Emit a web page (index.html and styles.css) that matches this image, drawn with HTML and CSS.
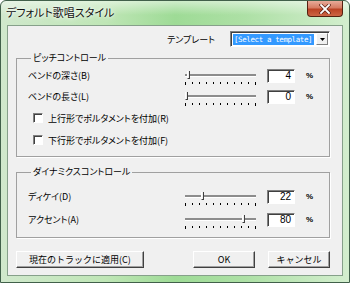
FILE: index.html
```html
<!DOCTYPE html>
<html lang="ja">
<head>
  <meta charset="UTF-8">
  <title>デフォルト歌唱スタイル</title>
  <link rel="stylesheet" href="styles.css">
</head>
<body>
  <div class="window">
    <div class="titlebar">
      <span class="title">デフォルト歌唱スタイル</span>
      <span class="close">
        <svg width="12" height="10" viewBox="0 0 12 10">
          <path d="M2 1 L10 9 M10 1 L2 9" stroke="#5a1f12" stroke-width="3.2" stroke-linecap="square"/>
          <path d="M2 1 L10 9 M10 1 L2 9" stroke="#fff" stroke-width="1.8" stroke-linecap="square"/>
        </svg>
      </span>
    </div>

    <div class="client">
      <div class="template-row">
        <span>テンプレート</span>
        <div class="combo">
          <span class="combo-text">[Select a template]</span>
          <span class="combo-btn">
            <svg width="5" height="3" viewBox="0 0 5 3"><path d="M0 0 H5 L2.5 3 Z" fill="#000"/></svg>
          </span>
        </div>
      </div>

      <fieldset class="group group-pitch">
        <legend>ピッチコントロール</legend>
        <div class="param">
          <span class="param-name">ベンドの深さ(B)</span>
          <div class="slider">
            <div class="track"></div>
            <div class="ticks"><i></i><i></i><i></i><i></i><i></i><i></i><i></i><i></i><i></i><i></i><i></i></div>
            <span class="thumb" style="left: 3px"></span>
          </div>
          <span class="numbox">4</span>
          <span class="unit">%</span>
        </div>
        <div class="param">
          <span class="param-name">ベンドの長さ(L)</span>
          <div class="slider">
            <div class="track"></div>
            <div class="ticks"><i></i><i></i><i></i><i></i><i></i><i></i><i></i><i></i><i></i><i></i><i></i></div>
            <span class="thumb" style="left: 1px"></span>
          </div>
          <span class="numbox">0</span>
          <span class="unit">%</span>
        </div>
        <label class="check check-first"><span class="box"></span>上行形でポルタメントを付加(R)</label>
        <label class="check"><span class="box"></span>下行形でポルタメントを付加(F)</label>
      </fieldset>

      <fieldset class="group group-dyn">
        <legend>ダイナミクスコントロール</legend>
        <div class="param">
          <span class="param-name">ディケイ(D)</span>
          <div class="slider">
            <div class="track"></div>
            <div class="ticks"><i></i><i></i><i></i><i></i><i></i><i></i><i></i><i></i><i></i><i></i><i></i></div>
            <span class="thumb" style="left: 17px"></span>
          </div>
          <span class="numbox">22</span>
          <span class="unit">%</span>
        </div>
        <div class="param">
          <span class="param-name">アクセント(A)</span>
          <div class="slider">
            <div class="track"></div>
            <div class="ticks"><i></i><i></i><i></i><i></i><i></i><i></i><i></i><i></i><i></i><i></i><i></i></div>
            <span class="thumb" style="left: 58px"></span>
          </div>
          <span class="numbox">80</span>
          <span class="unit">%</span>
        </div>
      </fieldset>

      <div class="buttons">
        <button class="btn btn-apply">現在のトラックに適用(C)</button>
        <div class="btn-group">
          <button class="btn">OK</button>
          <button class="btn">キャンセル</button>
        </div>
      </div>
    </div>
  </div>
</body>
</html>
```

FILE: styles.css
```css
* {
  box-sizing: border-box;
}
body {
  margin: 0;
  font-family: "Noto Sans CJK JP", sans-serif;
  font-size: 9px;
  font-feature-settings: "palt";
  color: #000;
  background: #fff;
}
.window {
  width: 350px;
  height: 283px;
  display: flex;
  flex-direction: column;
  border: 1px solid #41604a;
  border-radius: 6px 6px 0 0;
  background:
    linear-gradient(to bottom, rgba(255, 255, 255, 0.5), rgba(255, 255, 255, 0) 14px),
    linear-gradient(to right, #d0e8cc 0%, #bfe6b6 30%, #9edb96 50%, #ade0a5 70%, #d3eece 100%);
}
.titlebar {
  height: 24px;
  display: flex;
  justify-content: space-between;
  align-items: flex-start;
  padding-left: 5px;
}
.title {
  font-size: 11px;
  line-height: 13px;
  margin-top: 5px;
  color: #111;
  text-shadow: 0 0 3px #fff, 0 0 6px #fff;
}
.close {
  width: 36px;
  height: 16px;
  margin-right: 6px;
  display: flex;
  align-items: center;
  justify-content: center;
  border: 1px solid #55200f;
  border-top: none;
  border-radius: 0 0 4px 4px;
  background: linear-gradient(to bottom, #e8ab9a 0%, #d67c63 45%, #bb4325 55%, #cc6544 100%);
}
.client {
  flex: 1;
  margin: 0 6px 6px;
  padding: 5px 12px 0 8px;
  background: #f0f0f0;
  border: 1px solid #86a08a;
}

/* template selector */
.template-row {
  height: 16px;
  display: flex;
  justify-content: flex-end;
  align-items: center;
  gap: 15px;
}
.combo {
  width: 100px;
  height: 16px;
  display: flex;
  align-items: center;
  padding: 0 1px 0 2px;
  background: #fff;
  border: 1px solid;
  border-color: #808080 #fff #fff #808080;
  box-shadow: inset 1px 1px 0 #404040;
}
.combo-text {
  flex-shrink: 0;
  white-space: nowrap;
  width: 81px;
  height: 11px;
  padding: 0 1px;
  background: #3399ff;
  color: #fff;
  font-family: "DejaVu Sans Mono", monospace;
  font-size: 7.5px;
  line-height: 11px;
  letter-spacing: -0.4px;
}
.combo-btn {
  margin-left: auto;
  width: 12px;
  height: 12px;
  display: flex;
  align-items: center;
  justify-content: center;
  background: #f0f0f0;
  border: 1px solid;
  border-color: #fff #808080 #808080 #fff;
}

/* group boxes */
.group {
  margin: 5px 0 0;
  padding: 5px 11px 10px;
  border: 1px solid #a0a0a0;
  box-shadow: 1px 1px 0 #fff;
}
.group legend {
  margin-left: 3px;
  padding: 0 2px;
  line-height: 12px;
}
.group-dyn {
  margin-top: 9px;
  padding-top: 12px;
}
.param {
  display: flex;
  align-items: flex-start;
  height: 14px;
  line-height: 14px;
}
.param + .param {
  margin-top: 7px;
}
.group-dyn .param + .param {
  margin-top: 9px;
}
.param-name {
  width: 156px;
}
.slider {
  position: relative;
  width: 72px;
  height: 16px;
  display: flex;
  flex-direction: column;
}
.track {
  margin: 5px 0 0 1px;
  width: 71px;
  height: 3px;
  background: #8c8c8c;
  border-bottom: 1px solid #fff;
}
.ticks {
  margin: 5px 0 0 1px;
  width: 71px;
  height: 3px;
  display: flex;
  justify-content: space-between;
  align-items: flex-start;
}
.ticks i {
  display: block;
  width: 1px;
  height: 2px;
  background: #000;
}
.ticks i:first-child,
.ticks i:last-child {
  height: 3px;
}
.thumb {
  position: absolute;
  top: 2px;
  width: 3px;
  height: 8px;
  background: #f0f0f0;
  border-left: 1px solid #fff;
  border-right: 1px solid #404040;
  border-bottom: 1px solid #404040;
}
.numbox {
  width: 28px;
  height: 14px;
  margin-left: 11px;
  padding-right: 3px;
  text-align: right;
  font-family: "Liberation Sans", sans-serif;
  font-size: 10px;
  line-height: 12px;
  background: #fff;
  border: 1px solid;
  border-color: #808080 #fff #fff #808080;
  box-shadow: inset 1px 1px 0 #404040;
}
.unit {
  margin-left: 11px;
  font-family: "Liberation Sans", sans-serif;
  font-weight: bold;
  font-size: 8px;
}

/* check boxes */
.check {
  display: flex;
  align-items: center;
  gap: 5px;
  height: 12px;
  margin: 10px 0 0 5px;
}
.check-first {
  margin-top: 8px;
}
.box {
  width: 10px;
  height: 10px;
  background: #fff;
  border: 1px solid;
  border-color: #808080 #fff #fff #808080;
  box-shadow: inset 1px 1px 0 #404040;
}

/* bottom buttons */
.buttons {
  display: flex;
  margin-top: 13px;
}
.btn-group {
  margin-left: auto;
  display: flex;
  gap: 13px;
}
.btn {
  height: 17px;
  width: 62px;
  padding: 0;
  font-family: inherit;
  font-size: 9px;
  color: #000;
  background: #f0f0f0;
  border: 1px solid;
  border-color: #fff #404040 #404040 #fff;
  box-shadow: inset -1px -1px 0 #a0a0a0;
}
.btn-apply {
  width: 128px;
}
```
